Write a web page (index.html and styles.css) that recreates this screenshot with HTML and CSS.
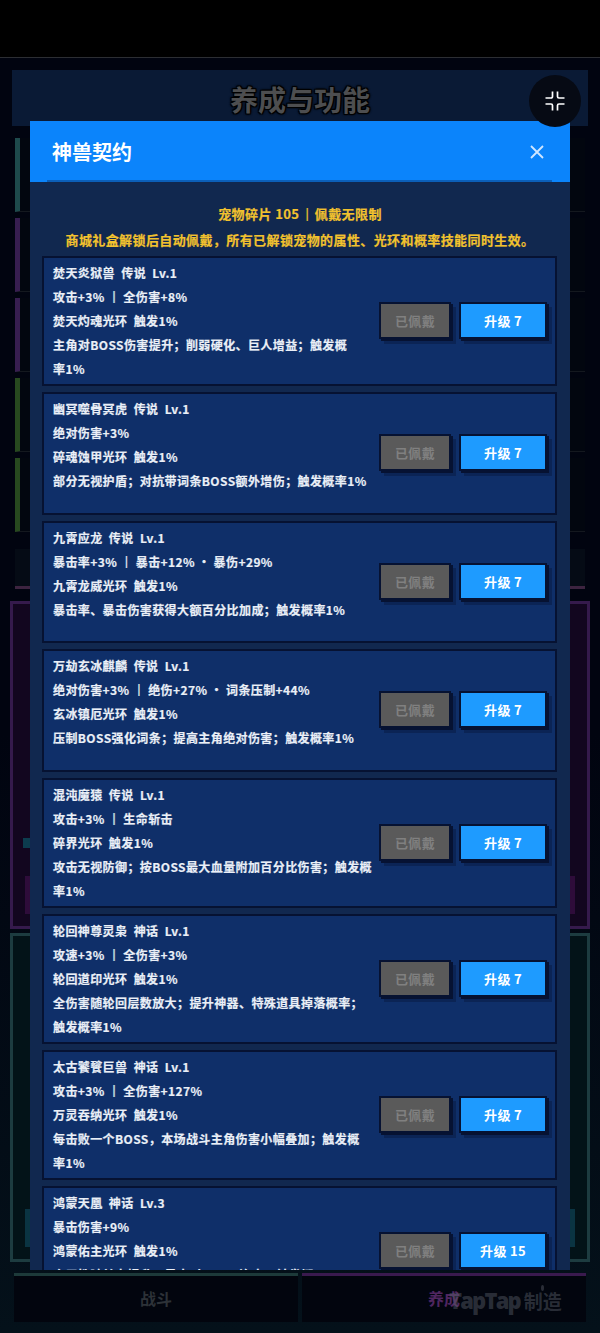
FILE: index.html
```html
<!DOCTYPE html>
<html lang="zh-CN">
<head>
  <meta charset="UTF-8" />
  <meta name="viewport" content="width=device-width, initial-scale=1.0"/>
  <title>神兽契约</title>
  <link rel="stylesheet" href="styles.css">
</head>
<body>
  <div class="status-bar"></div>

  <div class="game">
    <h1 class="game-title">养成与功能</h1>

    <div class="rows">
      <div class="row teal"></div>
      <div class="row purple"></div>
      <div class="row purple"></div>
      <div class="row green"></div>
      <div class="row green"></div>
    </div>

    <div class="strip"></div>

    <div class="panel panel-purple">
      <div class="chip chip-teal"></div>
      <div class="chip-row">
        <span class="chip chip-magenta"></span>
        <span class="chip chip-magenta"></span>
      </div>
    </div>

    <div class="panel panel-teal">
      <div class="chip-row">
        <span class="chip chip-cyan"></span>
        <span class="chip chip-cyan"></span>
      </div>
    </div>

    <div class="tabs">
      <div class="tab tab-fight">战斗</div>
      <div class="tab tab-grow">养成</div>
    </div>
  </div>

  <div class="modal">
    <div class="modal-head">
      <h2>神兽契约</h2>
      <svg class="close" viewBox="0 0 14 14" width="14" height="14">
        <path d="M1 1L13 13M13 1L1 13" stroke="#cfe6ff" stroke-width="1.8" fill="none"/>
      </svg>
    </div>
    <div class="modal-body">
      <p class="notice">宠物碎片 105<span class="bar notice-bar">｜</span>佩戴无限制</p>
      <p class="notice">商城礼盒解锁后自动佩戴，所有已解锁宠物的属性、光环和概率技能同时生效。</p>

      <div class="card">
        <div class="info">
          <div>焚天炎狱兽&nbsp; 传说&nbsp; Lv.1</div>
          <div>攻击+3% <span class="bar">｜</span> 全伤害+8%</div>
          <div>焚天灼魂光环&nbsp; 触发1%</div>
          <div>主角对BOSS伤害提升；削弱硬化、巨人增益；触发概<br>率1%</div>
        </div>
        <button class="btn worn">已佩戴</button>
        <button class="btn up">升级 7</button>
      </div>

      <div class="card">
        <div class="info">
          <div>幽冥噬骨冥虎&nbsp; 传说&nbsp; Lv.1</div>
          <div>绝对伤害+3%</div>
          <div>碎魂蚀甲光环&nbsp; 触发1%</div>
          <div>部分无视护盾；对抗带词条BOSS额外增伤；触发概率1%</div>
        </div>
        <button class="btn worn">已佩戴</button>
        <button class="btn up">升级 7</button>
      </div>

      <div class="card">
        <div class="info">
          <div>九霄应龙&nbsp; 传说&nbsp; Lv.1</div>
          <div>暴击率+3% <span class="bar">｜</span> 暴击+12% · 暴伤+29%</div>
          <div>九霄龙威光环&nbsp; 触发1%</div>
          <div>暴击率、暴击伤害获得大额百分比加成；触发概率1%</div>
        </div>
        <button class="btn worn">已佩戴</button>
        <button class="btn up">升级 7</button>
      </div>

      <div class="card">
        <div class="info">
          <div>万劫玄冰麒麟&nbsp; 传说&nbsp; Lv.1</div>
          <div>绝对伤害+3% <span class="bar">｜</span> 绝伤+27% · 词条压制+44%</div>
          <div>玄冰镇厄光环&nbsp; 触发1%</div>
          <div>压制BOSS强化词条；提高主角绝对伤害；触发概率1%</div>
        </div>
        <button class="btn worn">已佩戴</button>
        <button class="btn up">升级 7</button>
      </div>

      <div class="card">
        <div class="info">
          <div>混沌魔猿&nbsp; 传说&nbsp; Lv.1</div>
          <div>攻击+3% <span class="bar">｜</span> 生命斩击</div>
          <div>碎界光环&nbsp; 触发1%</div>
          <div>攻击无视防御；按BOSS最大血量附加百分比伤害；触发概<br>率1%</div>
        </div>
        <button class="btn worn">已佩戴</button>
        <button class="btn up">升级 7</button>
      </div>

      <div class="card">
        <div class="info">
          <div>轮回神尊灵枭&nbsp; 神话&nbsp; Lv.1</div>
          <div>攻速+3% <span class="bar">｜</span> 全伤害+3%</div>
          <div>轮回道印光环&nbsp; 触发1%</div>
          <div>全伤害随轮回层数放大；提升神器、特殊道具掉落概率；<br>触发概率1%</div>
        </div>
        <button class="btn worn">已佩戴</button>
        <button class="btn up">升级 7</button>
      </div>

      <div class="card">
        <div class="info">
          <div>太古饕餮巨兽&nbsp; 神话&nbsp; Lv.1</div>
          <div>攻击+3% <span class="bar">｜</span> 全伤害+127%</div>
          <div>万灵吞纳光环&nbsp; 触发1%</div>
          <div>每击败一个BOSS，本场战斗主角伤害小幅叠加；触发概<br>率1%</div>
        </div>
        <button class="btn worn">已佩戴</button>
        <button class="btn up">升级 7</button>
      </div>

      <div class="card">
        <div class="info">
          <div>鸿蒙天凰&nbsp; 神话&nbsp; Lv.3</div>
          <div>暴击伤害+9%</div>
          <div>鸿蒙佑主光环&nbsp; 触发1%</div>
          <div>全属性随关卡提升；暴击时 100%连击；触发概<br>率1%</div>
        </div>
        <button class="btn worn">已佩戴</button>
        <button class="btn up">升级 15</button>
      </div>
    </div>
  </div>

  <div class="fab">
    <svg viewBox="0 0 20 20" width="20" height="20">
      <path d="M0.5 7H6a1.5 1.5 0 0 0 1.5-1.5V0.5M12.5 0.5V5.5a1.5 1.5 0 0 0 1.5 1.5H19.5M19.5 13H14a1.5 1.5 0 0 0-1.5 1.5V19.5M7.5 19.5V14.5a1.5 1.5 0 0 0-1.5-1.5H0.5" stroke="#fff" stroke-width="1.7" fill="none"/>
    </svg>
  </div>

  <div class="watermark">TapTap <span>制造</span></div>
</body>
</html>
```

FILE: styles.css
```css
* {
  box-sizing: border-box;
}
body {
  margin: 0;
  height: 1333px;
  overflow: hidden;
  background: linear-gradient(#010410 55%, #04111a);
  font-family: "Noto Sans CJK SC", "Noto Sans", sans-serif;
  position: relative;
}
.status-bar {
  height: 58px;
  background: #000;
  border-bottom: 1px solid #2c2e33;
}
.game {
  padding: 12px 12px 0;
}
.game-title {
  margin: 0;
  height: 56px;
  line-height: 58px;
  text-align: center;
  font-size: 28px;
  font-weight: 700;
  color: #4d4e50;
  background: #0a1a35;
  text-shadow: 0 0 3px #000, 1px 1px 1px #000, -1px -1px 1px #000, 1px -1px 1px #000, -1px 1px 1px #000;
}
.rows {
  margin-top: 12px;
  padding: 0 3px;
  display: flex;
  flex-direction: column;
  gap: 6px;
}
.row {
  height: 74px;
  background: #02060f;
  border-left: 5px solid;
  border-bottom: 1px solid #14181f;
}
.teal { border-left-color: #1e4a4c; }
.purple { border-left-color: #371e50; }
.green { border-left-color: #27491f; }

.strip {
  height: 40px;
  margin: 17px 3px 0;
  background: #050b15;
  border-bottom: 3px solid #3d2440;
}
.panel {
  margin: 12px -2px 0;
  border: 3px solid;
  display: flex;
  flex-direction: column;
  justify-content: flex-end;
}
.panel-purple {
  height: 328px;
  background: #12061f;
  border-color: #351a4c;
  padding: 0 12px 12px;
}
.panel-teal {
  height: 329px;
  margin-top: 4px;
  background: #031318;
  border-color: #1d3c40;
  padding: 0 12px 12px;
}
.chip {
  display: block;
}
.chip-teal {
  width: 40%;
  height: 10px;
  margin: 0 0 28px -2px;
  background: #0c3c4e;
}
.chip-row {
  display: flex;
  justify-content: space-between;
}
.chip-magenta {
  width: 40%;
  height: 38px;
  background: #2e0c3a;
}
.chip-cyan {
  width: 40%;
  height: 38px;
  background: #0a3442;
}
.tabs {
  margin: 11px 2px 0;
  display: flex;
  gap: 4px;
}
.tab {
  flex: 1;
  height: 49px;
  line-height: 44px;
  text-align: center;
  font-size: 16px;
  font-weight: 700;
  background: #02050e;
  border-top: 3px solid;
}
.tab-fight {
  color: #2d3238;
  border-top-color: #1d3a3a;
}
.tab-grow {
  color: #4f2660;
  border-top-color: #3a1a4e;
}

/* contract dialog */
.modal {
  position: absolute;
  left: 30px;
  top: 121px;
  width: 540px;
  height: 1149px;
  background: #11284f;
  overflow: hidden;
}
.modal-head {
  height: 61px;
  background: #0b84fb;
  padding: 0 26px 0 22px;
  display: flex;
  align-items: center;
  justify-content: space-between;
  position: relative;
}
.modal-head::after {
  content: "";
  position: absolute;
  left: 17px;
  right: 18px;
  bottom: 0;
  height: 2px;
  background: #0c5fb8;
}
.modal-head h2 {
  margin: 0;
  font-size: 20px;
  font-weight: 700;
  color: #fff;
}
.modal-body {
  padding: 19px 12px 0 12px;
}
.notice {
  margin: 0;
  height: 26px;
  line-height: 26px;
  text-align: center;
  font-size: 13px;
  font-weight: 700;
  letter-spacing: 0.4px;
  color: #f2c22e;
  white-space: nowrap;
  -webkit-text-stroke: 0.2px currentColor;
}
.bar {
  text-shadow: 0.6px 0 0 currentColor;
}
.notice-bar {
  margin: 0 1px;
}
.card {
  margin: 0 1px 6px 0;
  min-height: 122.7px;
  border: 2px solid #061232;
  background: #0f2f69;
  padding: 3px 8px 3px 9px;
  display: flex;
  align-items: center;
  gap: 8px;
}
.card:first-of-type {
  margin-top: 3px;
}
.info {
  width: 321px;
  margin-right: -2px;
  align-self: flex-start;
  font-size: 12px;
  font-weight: 700;
  line-height: 24px;
  letter-spacing: 0.4px;
  color: #eaeff7;
  -webkit-text-stroke: 0.2px currentColor;
  white-space: nowrap;
}
.btn {
  flex: none;
  height: 37px;
  margin-bottom: 2px;
  padding: 0;
  border: 2px solid #061232;
  box-shadow: 2px 2px 0 #061232, 5px 5px 0 rgba(6, 18, 50, 0.35);
  font-family: inherit;
  font-size: 13px;
  font-weight: 700;
  letter-spacing: 0.3px;
}
.worn {
  width: 72px;
  background: #5a5a5a;
  color: #808080;
}
.up {
  width: 88px;
  background: #1e9bff;
  color: #fff;
}

.fab {
  position: absolute;
  left: 529px;
  top: 75px;
  width: 52px;
  height: 52px;
  border-radius: 50%;
  background: #060a14;
  display: flex;
  align-items: center;
  justify-content: center;
}
.watermark {
  position: absolute;
  left: 449px;
  top: 1284px;
  font-size: 22px;
  line-height: 32px;
  font-weight: 800;
  font-family: "Open Sans", sans-serif;
  letter-spacing: -1.8px;
  color: rgba(90, 96, 106, 0.45);
  white-space: nowrap;
}
.watermark span {
  font-family: "Noto Sans CJK SC", sans-serif;
  font-weight: 700;
  font-size: 19px;
  letter-spacing: 0;
}
.watermark::after {
  content: "";
  position: absolute;
  left: 92px;
  top: 1px;
  width: 3px;
  height: 6px;
  border-radius: 50%;
  background: rgba(90, 96, 106, 0.45);
}
```
